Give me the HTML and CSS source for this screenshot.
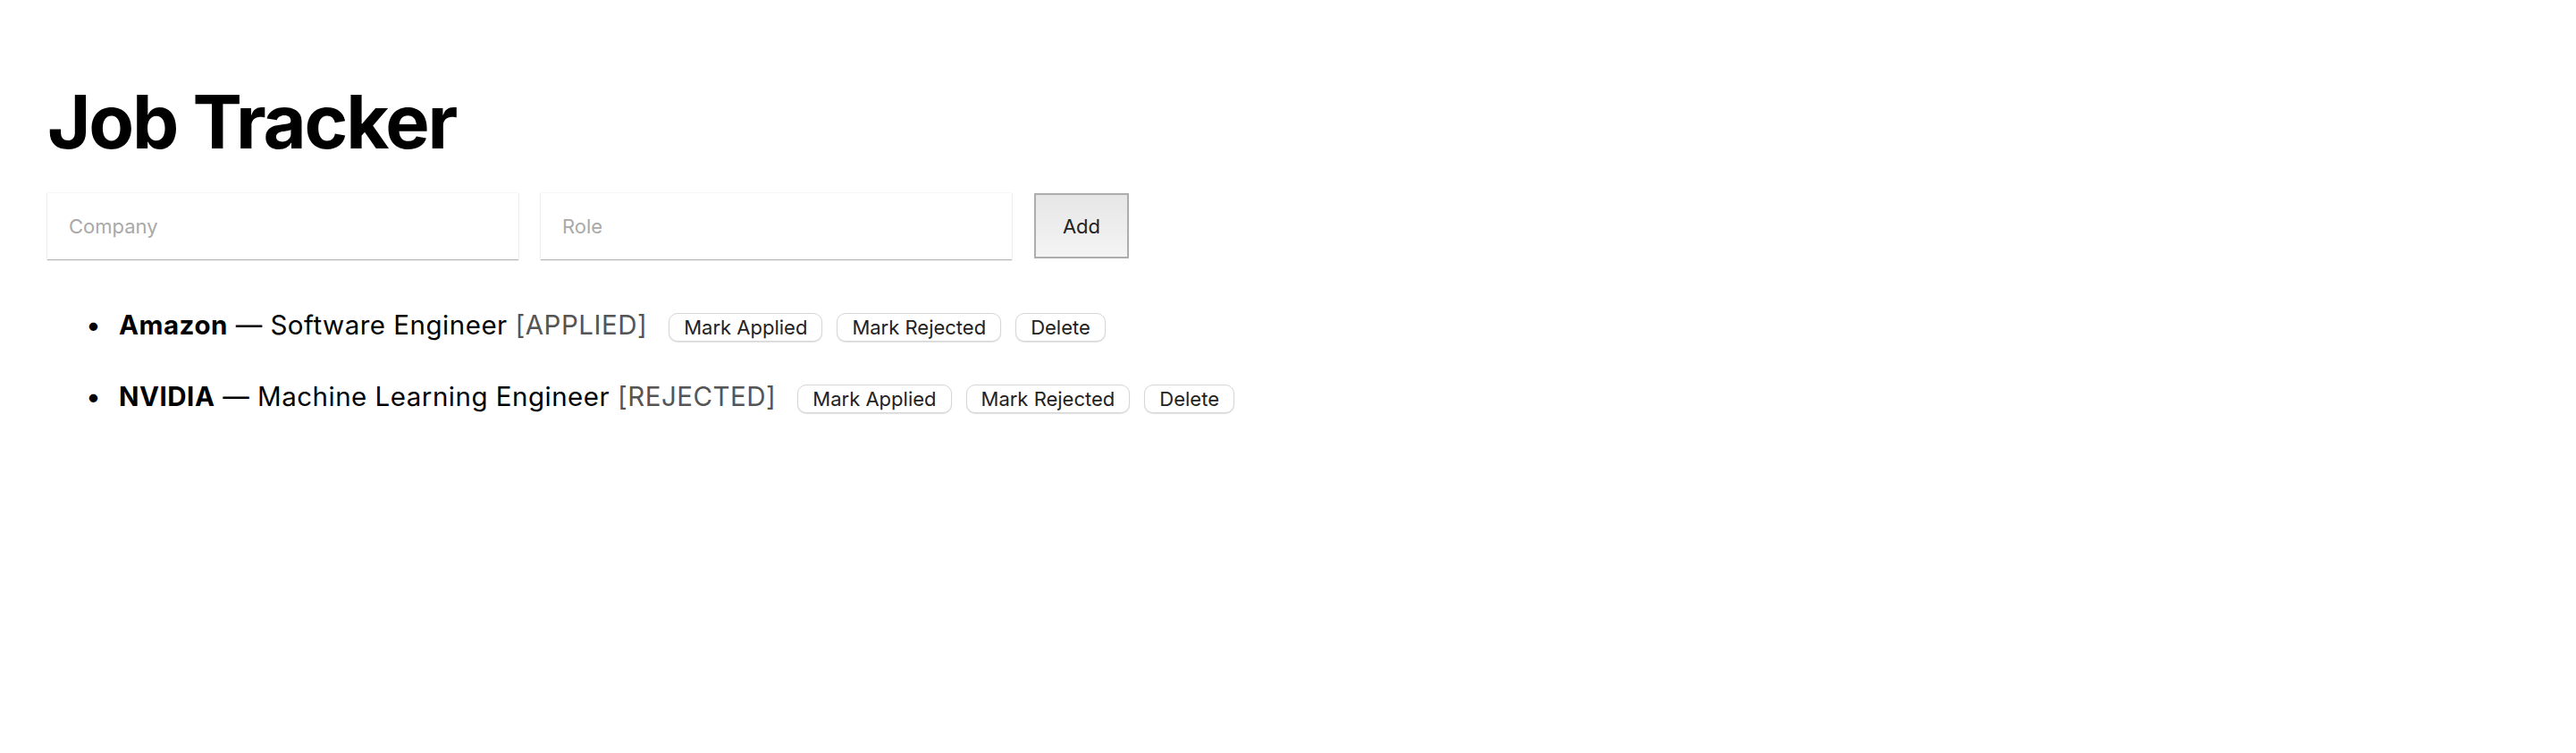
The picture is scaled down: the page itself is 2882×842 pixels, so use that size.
FILE: index.html
```html
<!DOCTYPE html>
<html lang="en">
<head>
<meta charset="utf-8">
<title>Job Tracker</title>
<link rel="stylesheet" href="styles.css">
</head>
<body>
<main class="app">
  <h1 class="title">Job Tracker</h1>
  <form class="add-form">
    <input class="field" type="text" placeholder="Company">
    <input class="field" type="text" placeholder="Role">
    <button class="add-btn" type="button">Add</button>
  </form>
  <ul class="jobs">
    <li class="job"><strong class="company">Amazon</strong> — Software Engineer <span class="status">[APPLIED]</span><span class="actions"><button class="btn" type="button">Mark Applied</button><button class="btn" type="button">Mark Rejected</button><button class="btn" type="button">Delete</button></span></li>
    <li class="job"><strong class="company">NVIDIA</strong> — Machine Learning Engineer <span class="status">[REJECTED]</span><span class="actions"><button class="btn" type="button">Mark Applied</button><button class="btn" type="button">Mark Rejected</button><button class="btn" type="button">Delete</button></span></li>
  </ul>
</main>
</body>
</html>
```
FILE: styles.css
```css
html, body {
  margin: 0;
  padding: 0;
  background: #ffffff;
}

body {
  font-family: Inter, "Noto Sans", "Liberation Sans", sans-serif;
  color: #000000;
}

.app {
  padding: 86px 0 0 53px;
}

.title {
  margin: 0 0 30px;
  font-size: 83px;
  line-height: 100px;
  font-weight: 700;
  letter-spacing: -2.2px;
}

.add-form {
  display: flex;
  align-items: flex-start;
  gap: 25px;
}

.field {
  box-sizing: border-box;
  width: 527px;
  height: 74px;
  margin: 0;
  padding: 0 24px;
  border: none;
  border-radius: 0;
  background: #ffffff;
  box-shadow: 0 1px 1px rgba(0, 0, 0, 0.28), 0 0 0 0.5px rgba(0, 0, 0, 0.06);
  font-family: inherit;
  font-size: 22px;
  color: #000;
  outline: none;
}

.field::placeholder {
  color: #a9a9a9;
}

.add-btn {
  box-sizing: border-box;
  width: 106px;
  height: 73px;
  margin: 0;
  padding: 0;
  border: 2px solid #adadad;
  border-radius: 0;
  background: linear-gradient(#e6e6e6, #f4f4f4);
  font-family: inherit;
  font-size: 22px;
  color: #222;
}

.jobs {
  margin: 49px 0 0;
  padding: 0 0 0 80px;
  list-style: none;
}

.job {
  margin: 0 0 32px;
  font-size: 29.5px;
  line-height: 48px;
  letter-spacing: 0.5px;
}

.job::before {
  content: "•";
  display: inline-block;
  width: 37px;
  margin-left: -37px;
  font-size: 30px;
  letter-spacing: 0;
}

.company {
  font-weight: 700;
}

.status {
  color: #555555;
}

.actions {
  display: inline-flex;
  gap: 16px;
  margin-left: 24px;
  vertical-align: baseline;
  letter-spacing: 0;
}

.btn {
  box-sizing: border-box;
  height: 32px;
  margin: 0;
  padding: 4px 16px;
  border: 1px solid #d6d6d6;
  border-radius: 10px;
  background: #ffffff;
  box-shadow: 0 1px 1px rgba(0, 0, 0, 0.12);
  font-family: inherit;
  font-size: 22px;
  line-height: 22px;
  color: #222;
}
```
